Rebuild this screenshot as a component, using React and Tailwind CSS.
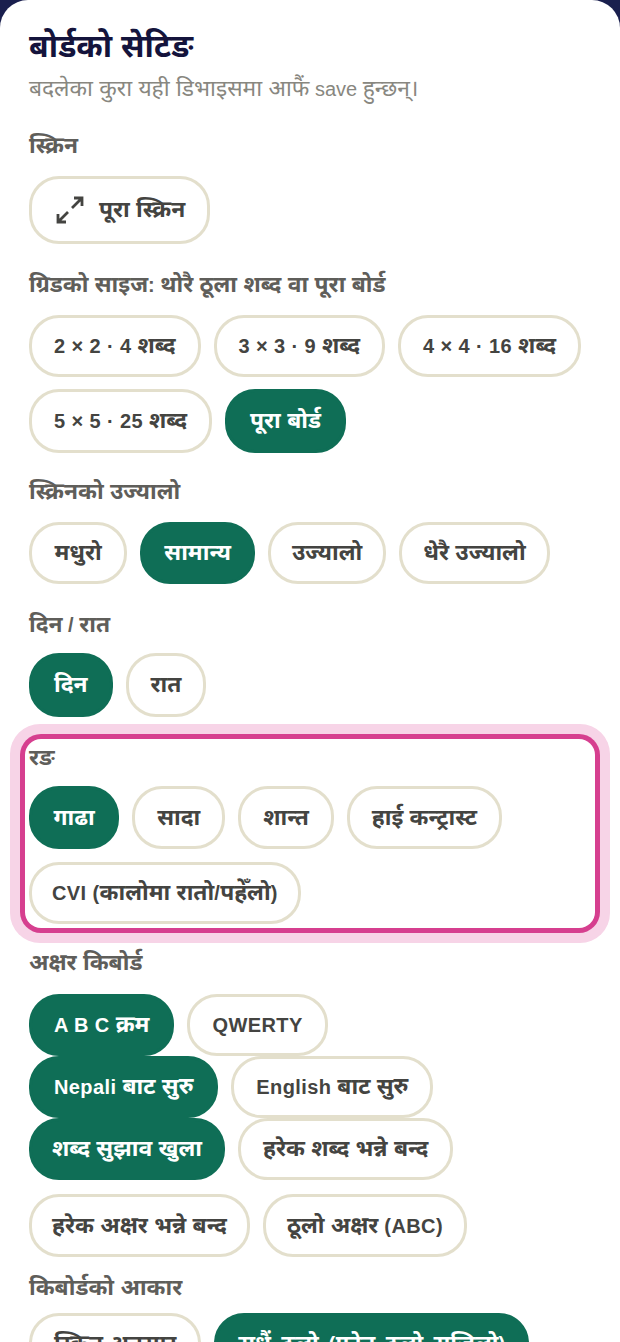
const font = "font-['Liberation_Sans','Noto_Sans',sans-serif]";

function Deva({ text, latin = "" }) {
  const parts = text.split(/([\u0900-\u097F]+(?:\s+[\u0900-\u097F]+)*)/);
  return (
    <>
      {parts.map((p, i) =>
        /[\u0900-\u097F]/.test(p) ? (
          <span key={i} className="text-[1.14em] leading-none">{p}</span>
        ) : (
          <span key={i} className={latin}>{p}</span>
        )
      )}
    </>
  );
}

function Chip({ on, text, h = "h-[62px]", pad = "px-[22px]", className = "", children }) {
  return (
    <button
      className={
        "flex items-center justify-center rounded-[30px] border-[3px] text-[20px] leading-[30px] font-bold whitespace-nowrap " +
        (on ? "border-[#0f6e56] bg-[#0f6e56] text-white " : "border-[#e3dfcc] bg-white text-[#444441] ") +
        h + " " + pad + " " + className
      }
    >
      {children}
      <span><Deva text={text} latin="tracking-[0.4px]" /></span>
    </button>
  );
}

function Label({ text, className = "mb-[15px] h-[30px]" }) {
  return (
    <div className={"text-[20px] leading-[30px] font-bold text-[#5f5e5a] " + className}>
      <Deva text={text} />
    </div>
  );
}

export default function App() {
  return (
    <div className={"h-[1342px] w-[620px] overflow-hidden bg-[#1a1f4e] " + font}>
      <div className="h-full rounded-t-[28px] bg-white px-[29px] pt-[27px]">
        <h1 className="h-[42px] text-[28px] leading-[42px] font-bold text-[#14143c]"><Deva text="बोर्डको सेटिङ" /></h1>
        <p className="mt-[5px] mb-[27px] h-[30px] text-[20px] leading-[30px] text-[#888780]"><Deva text="बदलेका कुरा यही डिभाइसमा आफैं save हुन्छन्।" /></p>

        <Label text="स्क्रिन" />
        <div className="mb-[26px] flex flex-wrap gap-[12px]">
          <Chip text="पूरा स्क्रिन" h="h-[68px]" pad="pr-[22px] pl-[24px]" className="gap-[15px]">
            <svg width="28" height="28" viewBox="0 0 28 28" fill="none" stroke="currentColor" strokeWidth="2.8">
              <path d="M16 12 L26 2 M18 2 H26 V10 M12 16 L2 26 M2 18 V26 H10" />
            </svg>
          </Chip>
        </div>

        <Label text="ग्रिडको साइज: थोरै ठूला शब्द वा पूरा बोर्ड" />
        <div className="mb-[24px] flex flex-wrap gap-x-[13px] gap-y-[12px]">
          <Chip text="2 × 2 · 4 शब्द" />
          <Chip text="3 × 3 · 9 शब्द" />
          <Chip text="4 × 4 · 16 शब्द" />
          <Chip text="5 × 5 · 25 शब्द" h="h-[64px]" />
          <Chip on text="पूरा बोर्ड" h="h-[64px]" />
        </div>

        <Label text="स्क्रिनको उज्यालो" />
        <div className="mb-[26px] flex flex-wrap gap-x-[13px] gap-y-[12px]">
          <Chip text="मधुरो" pad="px-[22.5px]" />
          <Chip on text="सामान्य" pad="px-[21px]" />
          <Chip text="उज्यालो" pad="px-[21px]" />
          <Chip text="धेरै उज्यालो" pad="px-[21px]" />
        </div>

        <Label text="दिन / रात" className="mb-[13px] h-[30px]" />
        <div className="mb-[26px] flex flex-wrap gap-x-[13px] gap-y-[12px]">
          <Chip on text="दिन" h="h-[64px]" />
          <Chip text="रात" h="h-[64px]" />
        </div>

        <div className="rounded-[12px] bg-white shadow-[0_0_0_4px_#ffffff,0_0_0_9px_#d63f8f,0_0_0_19px_#f7d4e7]">
          <Label text="रङ" className="mb-[14px] h-[29px]" />
          <div className="flex flex-wrap gap-x-[13px] gap-y-[13px]">
            <Chip on text="गाढा" h="h-[63px]" pad="px-[21.5px]" />
            <Chip text="सादा" h="h-[63px]" />
            <Chip text="शान्त" h="h-[63px]" />
            <Chip text="हाई कन्ट्रास्ट" h="h-[63px]" />
            <Chip text="CVI (कालोमा रातो/पहेँलो)" pad="px-[20px]" />
          </div>
        </div>

        <Label text="अक्षर किबोर्ड" className="mt-[24px] mb-[16px] h-[30px]" />
        <div className="flex flex-wrap gap-[13px]">
          <Chip on text="A B C क्रम" />
          <Chip text="QWERTY" />
        </div>
        <div className="flex flex-wrap gap-[13px]">
          <Chip on text="Nepali बाट सुरु" />
          <Chip text="English बाट सुरु" />
        </div>
        <div className="mb-[16px] flex flex-wrap gap-x-[13px] gap-y-[14px]">
          <Chip on text="शब्द सुझाव खुला" pad="px-[20px]" />
          <Chip text="हरेक शब्द भन्ने बन्द" />
          <Chip text="हरेक अक्षर भन्ने बन्द" h="h-[63px]" pad="px-[20px]" />
          <Chip text="ठूलो अक्षर (ABC)" h="h-[63px]" pad="px-[21px]" />
        </div>

        <Label text="किबोर्डको आकार" className="mb-[10px] h-[30px]" />
        <div className="flex flex-wrap gap-[13px]">
          <Chip text="स्क्रिन अनुसार" />
          <Chip on text="सधैं ठूलो (फोन ठूलो सजिलो)" className="w-[315px] [word-spacing:4px]" />
        </div>
      </div>
    </div>
  );
}
